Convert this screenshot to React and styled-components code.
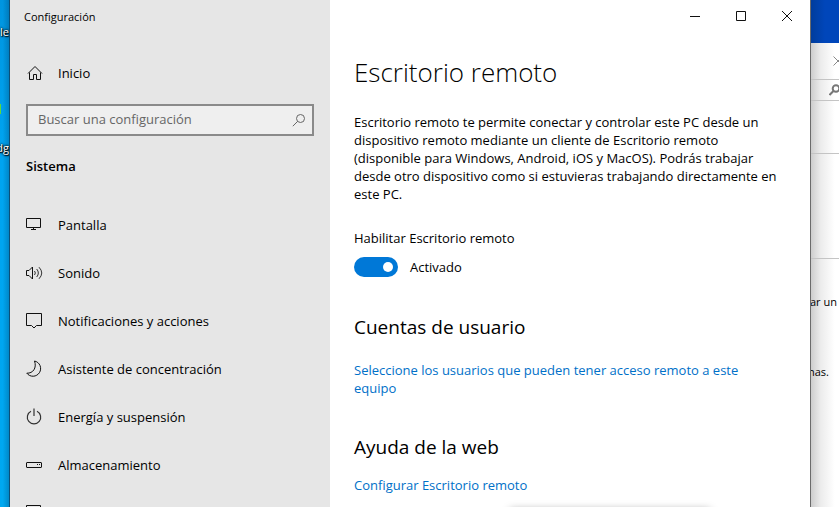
import React, { useState } from "react";
import styled, { createGlobalStyle } from "styled-components";

const GlobalStyle = createGlobalStyle`
  * { box-sizing: border-box; }
  body {
    margin: 0;
    background: #00a2ed;
    color: #000;
    font: 13px/18px "Open Sans", "Noto Sans", sans-serif;
  }
  button, input { font: inherit; color: inherit; }
  h1, h2, p { margin: 0; }
`;

const Desktop = styled.div`
  display: grid;
  grid-template-columns: 9px minmax(0, 1fr) 28px;
  height: 100vh;
  overflow: hidden;
`;

const Wallpaper = styled.div`
  display: flex;
  flex-direction: column;
  align-items: flex-end;
  padding-top: 24px;
  overflow: hidden;
  background: linear-gradient(90deg, rgba(0, 30, 60, 0) 30%, rgba(0, 30, 60, 0.22)),
    linear-gradient(#0095e0, #00a4f0 30%, #00a8f0);
`;

const ShortcutLabel = styled.span`
  color: #fff;
  font-size: 11px;
  line-height: 16px;
  text-shadow: 1px 1px 1px #000, 0 0 2px #000, 0 0 3px #000;
`;

const GreenIcon = styled.span`
  align-self: flex-start;
  width: 1px;
  height: 10px;
  margin: 64px 0 26px;
  background: #5fd83b;
`;

const Window = styled.div`
  z-index: 1;
  display: grid;
  grid-template-columns: 320px minmax(0, 1fr);
  overflow: hidden;
  background: #fff;
  border: solid #0b4f78;
  border-width: 0 1px;
  border-right-color: #6b6b6b;
`;

const Sidebar = styled.aside`
  overflow: hidden;
  background: #e6e6e6;
`;

const AppTitle = styled.div`
  height: 32px;
  padding-left: 14px;
  font-size: 11px;
  line-height: 33px;
`;

const NavLink = styled.a`
  display: flex;
  align-items: center;
  gap: 14px;
  height: 48px;
  padding: 0 16px;
  color: #000;
  text-decoration: none;

  svg { flex: none; }
`;

const HomeLink = styled(NavLink)`
  margin: 17px 0 7px;
`;

const SearchBox = styled.label`
  display: flex;
  align-items: center;
  height: 32px;
  margin: 0 16px;
  padding: 0 6px 0 10px;
  background: #efefef;
  border: 2px solid #8a8a8a;
`;

const SearchInput = styled.input`
  flex: 1;
  min-width: 0;
  padding: 0 0 2px;
  background: none;
  border: 0;
  outline: 0;

  &::placeholder { color: #666; opacity: 1; }
`;

const SectionName = styled.h2`
  margin: 21px 16px 26px;
  font-size: 13px;
  font-weight: 600;
  line-height: 18px;
`;

const Main = styled.main`
  overflow: hidden;
`;

const WindowControls = styled.div`
  display: flex;
  justify-content: flex-end;
`;

const ControlButton = styled.button`
  display: grid;
  place-items: center;
  width: 46px;
  height: 32px;
  padding: 0;
  background: none;
  border: 0;

  &:hover { background: #e5e5e5; }
`;

const Page = styled.div`
  max-width: 480px;
  padding: 20px 22px 0 24px;
`;

const PageTitle = styled.h1`
  font-size: 26px;
  font-weight: 300;
  line-height: 40px;
`;

const Intro = styled.p`
  margin-top: 21px;
`;

const SwitchTitle = styled.p`
  margin-top: 26px;
`;

const SwitchRow = styled.label`
  display: flex;
  align-items: center;
  gap: 12px;
  width: max-content;
  margin-top: 10px;
`;

const Toggle = styled.input`
  appearance: none;
  display: flex;
  align-items: center;
  justify-content: ${(p) => (p.checked ? "flex-end" : "flex-start")};
  width: 44px;
  height: 20px;
  margin: 0;
  padding: 0 5px;
  background: ${(p) => (p.checked ? "#0078d7" : "#888")};
  border-radius: 10px;

  &::before {
    content: "";
    width: 10px;
    height: 10px;
    background: #fff;
    border-radius: 50%;
  }
`;

const GroupTitle = styled.h2`
  margin-top: 36px;
  font-size: 19px;
  font-weight: 400;
  line-height: 28px;
`;

const TextLink = styled.a`
  display: block;
  max-width: 410px;
  margin-top: ${(p) => p.$gap}px;
  color: #0070c8;
  line-height: 18px;
  text-decoration: none;
`;

const MenuShadow = styled.div`
  width: 200px;
  height: 20px;
  margin: 16px 0 0 156px;
  box-shadow: 0 0 9px rgba(0, 0, 0, 0.4);
`;

const BackWindow = styled.div`
  overflow: hidden;
  background: linear-gradient(90deg, #cdcdcd, #ececec 35%, #fff 85%);
  color: #000;
  font-size: 11px;
  line-height: 16px;
  white-space: nowrap;
`;

const BlueWall = styled.div`
  height: 43px;
  background: linear-gradient(90deg, #003c9c, #0046ba 50%);
`;

const BackBar = styled.div`
  display: flex;
  align-items: center;
  justify-content: flex-end;
  height: ${(p) => p.$height}px;
  border-bottom: 1px solid #c4c4c4;
`;

const BackText = styled.p`
  height: 70px;
  padding-top: 35px;
  text-indent: ${(p) => p.$indent}px;
`;

const Icon = ({ children, size = 18, ...rest }) => (
  <svg width={size} height={size} viewBox={`0 0 ${size} ${size}`} fill="none" stroke="#111" aria-hidden="true" {...rest}>
    {children}
  </svg>
);

const icons = {
  home: (
    <Icon>
      <path d="M2 9.5 9 2.5l7 7M3.5 8.5v7h4v-5h3v5h4v-7" />
    </Icon>
  ),
  display: (
    <Icon>
      <path d="M.5 2.5h14v9H.5zM7.5 11.5v2M5 13.5h5" />
    </Icon>
  ),
  sound: (
    <Icon>
      <path d="M.5 6.500h2.500L6.500 3v12L3 11.500H.5z" />
      <path d="M8.500 7q1.700 2 0 4M10.700 5q3.300 4 0 8M13 3.200q5.500 5.800 0 11.600" stroke="#333" />
    </Icon>
  ),
  notification: (
    <Icon>
      <path d="M.5 1.5h15v12h-5L8 16l-2.500-2.500h-5z" />
    </Icon>
  ),
  moon: (
    <Icon>
      <path d="M8.500 1A7.700 7.700 0 1 1 .8 13.200C7 13.500 11 8 8.500 1z" />
    </Icon>
  ),
  power: (
    <Icon>
      <path d="M5 3.200A6.700 6.700 0 1 0 11 3.200M8 .5v7.500" stroke="#333" strokeWidth="1.200" />
    </Icon>
  ),
  storage: (
    <Icon>
      <rect x=".5" y="6.500" width="15" height="5" rx=".5" />
      <path d="M11 8.500h1M13 8.500h1" />
    </Icon>
  ),
  tablet: (
    <Icon>
      <path d="M.5 1.500h14v10H.5z" />
    </Icon>
  ),
};

const sections = [
  ["display", "Pantalla"],
  ["sound", "Sonido"],
  ["notification", "Notificaciones y acciones"],
  ["moon", "Asistente de concentración"],
  ["power", "Energía y suspensión"],
  ["storage", "Almacenamiento"],
  ["tablet", ""],
];

export default function App() {
  const [enabled, setEnabled] = useState(true);

  return (
    <>
      <GlobalStyle />
      <Desktop>
        <Wallpaper>
          <ShortcutLabel>le</ShortcutLabel>
          <GreenIcon />
          <ShortcutLabel>dg</ShortcutLabel>
        </Wallpaper>

        <Window>
          <Sidebar>
            <AppTitle>Configuración</AppTitle>
            <HomeLink href="#inicio">
              {icons.home}
              Inicio
            </HomeLink>
            <SearchBox>
              <SearchInput type="text" placeholder="Buscar una configuración" aria-label="Buscar una configuración" />
              <Icon size={14} stroke="#666">
                <circle cx="8.500" cy="5.500" r="4" />
                <path d="M5.700 8.300.8 13.200" />
              </Icon>
            </SearchBox>
            <SectionName>Sistema</SectionName>
            <nav>
              {sections.map(([icon, label]) => (
                <NavLink key={icon} href={`#${icon}`} aria-label={label || "Tableta"}>
                  {icons[icon]}
                  {label}
                </NavLink>
              ))}
            </nav>
          </Sidebar>

          <Main>
            <WindowControls>
              <ControlButton aria-label="Minimizar">
                <Icon size={10}>
                  <path d="M0 5.500h10" />
                </Icon>
              </ControlButton>
              <ControlButton aria-label="Maximizar">
                <Icon size={10}>
                  <path d="M.5.5h9v9h-9z" />
                </Icon>
              </ControlButton>
              <ControlButton aria-label="Cerrar">
                <Icon size={10}>
                  <path d="m0 0 10 10M10 0 0 10" />
                </Icon>
              </ControlButton>
            </WindowControls>

            <Page>
              <PageTitle>Escritorio remoto</PageTitle>
              <Intro>
                Escritorio remoto te permite conectar y controlar este PC desde un dispositivo remoto mediante un
                cliente de Escritorio remoto (disponible para Windows, Android, iOS y MacOS). Podrás trabajar desde
                otro dispositivo como si estuvieras trabajando directamente en este PC.
              </Intro>
              <SwitchTitle>Habilitar Escritorio remoto</SwitchTitle>
              <SwitchRow>
                <Toggle
                  type="checkbox"
                  role="switch"
                  checked={enabled}
                  onChange={(e) => setEnabled(e.target.checked)}
                />
                {enabled ? "Activado" : "Desactivado"}
              </SwitchRow>
              <GroupTitle>Cuentas de usuario</GroupTitle>
              <TextLink href="#usuarios" $gap={20}>
                Seleccione los usuarios que pueden tener acceso remoto a este equipo
              </TextLink>
              <GroupTitle>Ayuda de la web</GroupTitle>
              <TextLink href="#ayuda" $gap={15}>Configurar Escritorio remoto</TextLink>
              <MenuShadow />
            </Page>
          </Main>
        </Window>

        <BackWindow>
          <BlueWall />
          <BackBar $height={37}>
            <Icon width="6" height="10" viewBox="0 0 6 10" stroke="#888">
              <path d="m.5.5 9 9M.5 9.500l9-9" />
            </Icon>
          </BackBar>
          <BackBar $height={21}>
            <Icon width="10" height="12" viewBox="0 0 10 12" stroke="#777" strokeWidth="2">
              <circle cx="7" cy="4.500" r="3.300" />
              <path d="M4.500 7 .5 11" />
            </Icon>
          </BackBar>
          <BackBar $height={53} />
          <BackBar $height={105} />
          <BackText $indent={-1}>ar un</BackText>
          <BackText $indent={-3}>nas.</BackText>
        </BackWindow>
      </Desktop>
    </>
  );
}
